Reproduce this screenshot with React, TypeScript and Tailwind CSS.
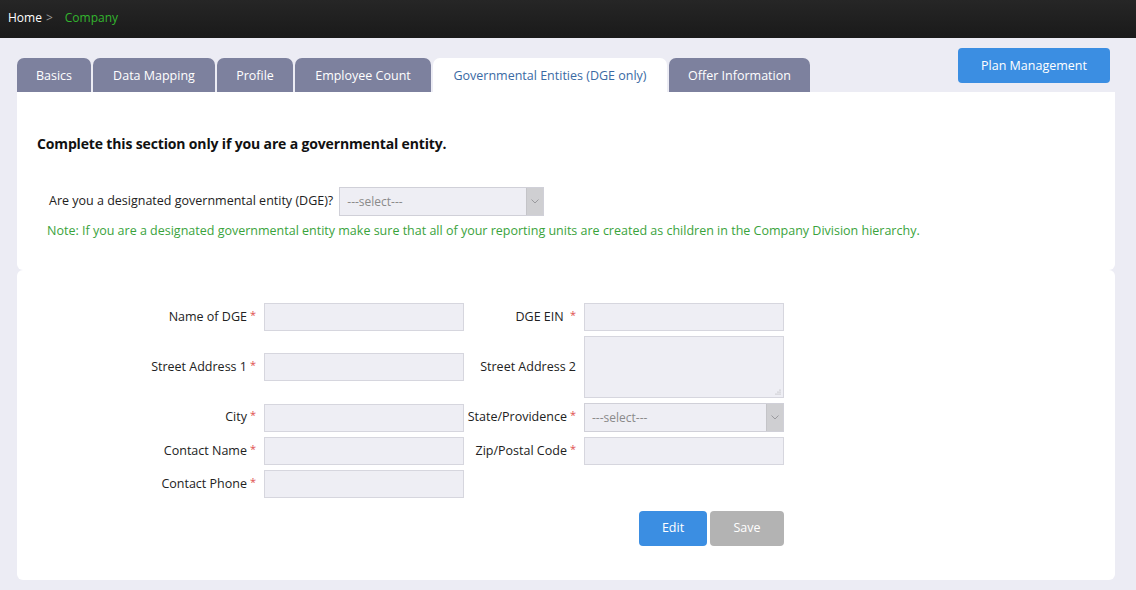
import React from "react";

const Req = () => <span className="text-[#e05050] ml-[3px] text-[11px] relative -top-[2px]">*</span>;

const Input = ({ h = "h-[28px]" }: { h?: string }) => (
  <div className={`w-[200px] ${h} bg-[#eeeef4] border border-[#d6d6de]`} />
);

const Select = ({ w }: { w: string }) => (
  <div className={`${w} h-[29px] bg-[#eeeef4] border border-[#d0d0d8] flex items-center`}>
    <span className="flex-1 pl-[7px] text-[12px] text-[#8a8a8a]">---select---</span>
    <div className="w-[17px] h-full bg-[#cfcfd2] border-l border-[#c4c4c8] flex items-center justify-center">
      <svg width="8" height="5" viewBox="0 0 8 5">
        <path d="M0.5 0.5 L4 4 L7.5 0.5" stroke="#9a9a9e" strokeWidth="1" fill="none" />
      </svg>
    </div>
  </div>
);

const Label = ({ children, req = true }: { children: React.ReactNode; req?: boolean }) => (
  <div className="flex items-center justify-end pr-[8px] text-[12.5px] text-[#222]">
    {children}
    {req && <Req />}
  </div>
);

export default function App() {
  const tabs = ["Basics", "Data Mapping", "Profile", "Employee Count", "Governmental Entities (DGE only)", "Offer Information"];
  const widths = ["w-[74px]", "w-[122px]", "w-[76px]", "w-[136px]", "w-[234px]", "w-[141px]"];
  return (
    <div className="w-[1136px] h-[590px] bg-[#ececf4] overflow-hidden flex flex-col" style={{ fontFamily: '"Open Sans", "Noto Sans", sans-serif' }}>
      <div className="h-[38px] bg-gradient-to-b from-[#262626] to-[#1a1a1a] flex items-center pl-[8px] pb-[3px] text-[12px] shrink-0">
        <span className="text-white">Home</span>
        <span className="text-[#9a9a9a] ml-[4px]">&gt;</span>
        <span className="text-[#33b52e] ml-[12px]">Company</span>
      </div>
      <div className="flex-1 pl-[17px] pr-[21px] flex flex-col">
        <div className="flex items-end justify-between h-[54px]">
          <div className="flex gap-[2px]">
            {tabs.map((t, i) => (
              <div
                key={t}
                className={`${widths[i]} h-[34px] pt-[2px] rounded-t-[7px] flex items-center justify-center text-[12.5px] ${
                  i === 4 ? "bg-white text-[#3a6aa4]" : "bg-[#7d819e] text-white"
                }`}
              >
                {t}
              </div>
            ))}
          </div>
          <div className="self-start mt-[10px] mr-[5px] w-[152px] h-[35px] pt-[2px] rounded-[4px] bg-[#3b8ee2] text-white text-[12.5px] flex items-center justify-center">
            Plan Management
          </div>
        </div>
        <div className="bg-white rounded-b-[6px] h-[178px] pt-[41px]">
          <div className="pl-[20px] text-[14px] tracking-[-0.15px] font-bold text-[#111]">Complete this section only if you are a governmental entity.</div>
          <div className="pl-[32px] mt-[33px] flex items-center text-[12.5px] text-[#222]">
            <span>Are you a designated governmental entity (DGE)?</span>
            <div className="ml-[6px]">
              <Select w="w-[205px]" />
            </div>
          </div>
          <div className="pl-[30px] mt-[6px] text-[12.5px] text-[#3aa33c]">
            Note: If you are a designated governmental entity make sure that all of your reporting units are created as children in the Company Division hierarchy.
          </div>
        </div>
        <div className="bg-white rounded-[6px] h-[310px] pt-[33px]">
          <div className="grid grid-cols-[247px_200px_120px_200px] gap-y-[5px] items-center">
            <Label>Name of DGE</Label>
            <Input />
            <Label>DGE EIN&nbsp;</Label>
            <Input />

            <Label>Street Address 1</Label>
            <Input />
            <Label req={false}>Street Address 2</Label>
            <div className="w-[200px] h-[62px] bg-[#eeeef4] border border-[#d6d6de] relative">
              <svg className="absolute right-[2px] bottom-[2px]" width="6" height="6" viewBox="0 0 6 6">
                <circle cx="5" cy="1" r="0.6" fill="#aaa" />
                <circle cx="5" cy="3" r="0.6" fill="#aaa" />
                <circle cx="5" cy="5" r="0.6" fill="#aaa" />
                <circle cx="3" cy="3" r="0.6" fill="#aaa" />
                <circle cx="3" cy="5" r="0.6" fill="#aaa" />
                <circle cx="1" cy="5" r="0.6" fill="#aaa" />
              </svg>
            </div>

            <Label>City</Label>
            <Input />
            <Label>State/Providence</Label>
            <Select w="w-[200px]" />

            <Label>Contact Name</Label>
            <Input />
            <Label>Zip/Postal Code</Label>
            <Input />

            <Label>Contact Phone</Label>
            <Input />
            <div />
            <div />
          </div>
          <div className="w-[767px] flex justify-end gap-[3px] mt-[13px]">
            <div className="w-[68px] h-[35px] rounded-[4px] bg-[#3b8ee2] text-white text-[12.5px] flex items-center justify-center">Edit</div>
            <div className="w-[74px] h-[35px] rounded-[4px] bg-[#b3b3b3] text-white text-[12.5px] flex items-center justify-center">Save</div>
          </div>
        </div>
      </div>
    </div>
  );
}
